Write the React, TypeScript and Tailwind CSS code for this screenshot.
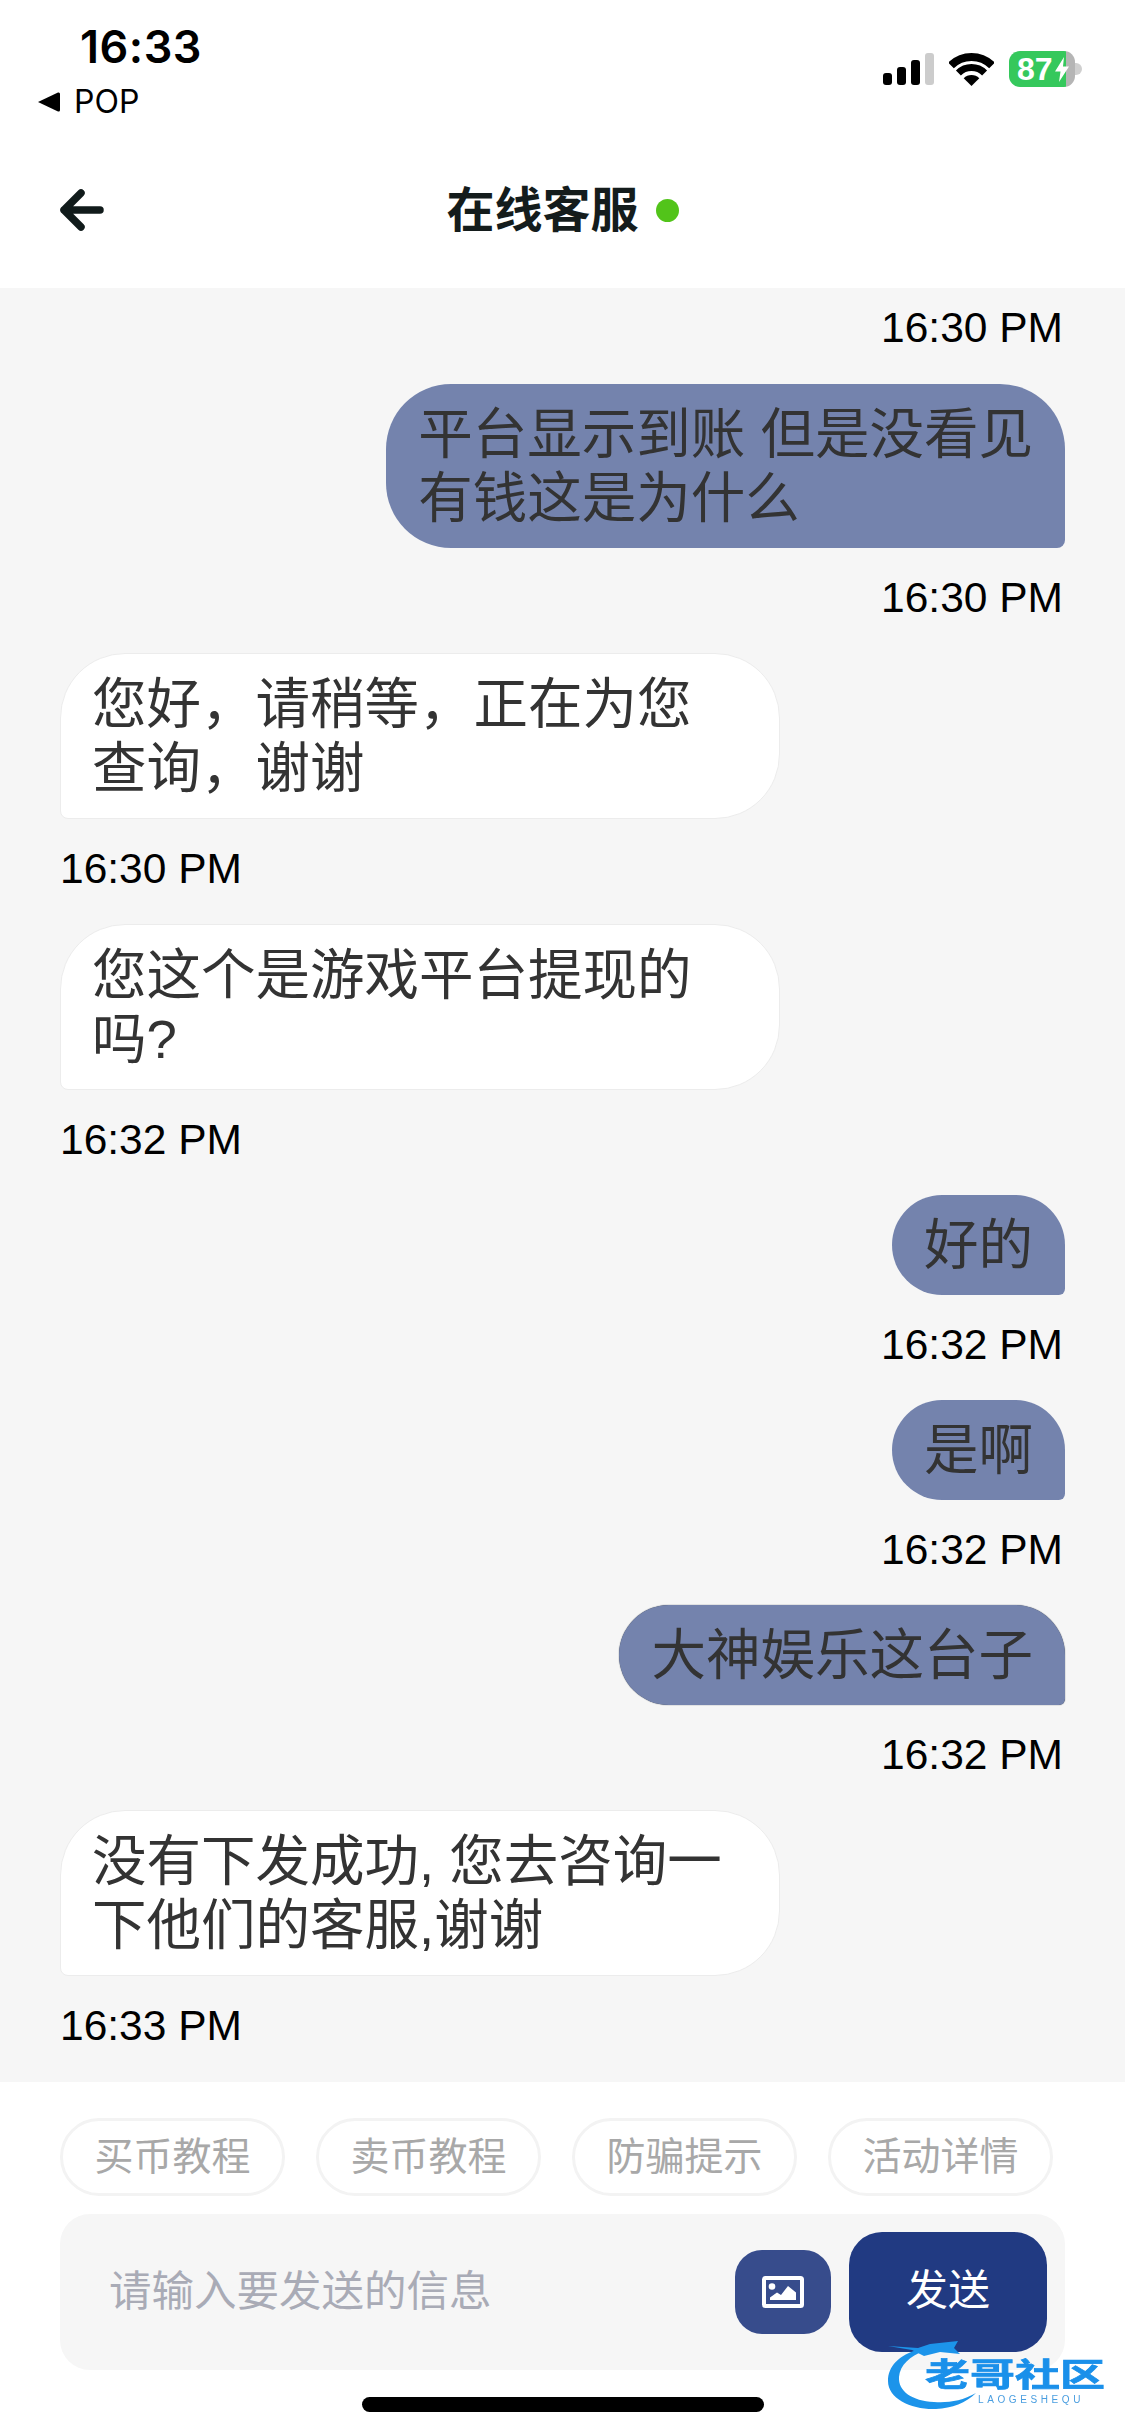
const messages = [
  { time: "16:30 PM", me: true, lines: ["平台显示到账 但是没看见", "有钱这是为什么"] },
  { time: "16:30 PM", me: false, lines: ["您好，请稍等，正在为您", "查询，谢谢"] },
  { time: "16:32 PM", me: false, lines: ["您这个是游戏平台提现的", "吗?"] },
  { time: "16:32 PM", me: true, lines: ["好的"] },
  { time: "16:32 PM", me: true, lines: ["是啊"] },
  { time: "16:32 PM", me: true, edge: true, lines: ["大神娱乐这台子"] },
  { time: "16:33 PM", me: false, lines: ["没有下发成功, 您去咨询一", "下他们的客服,谢谢"] },
];

const chips = ["买币教程", "卖币教程", "防骗提示", "活动详情"];

function StatusIcons() {
  return (
    <div className="flex items-center gap-[15px] mt-[51px] h-[36px] pr-[43px]">
      <div className="flex items-end gap-[5px] h-[32px]">
        <div className="w-[9px] h-[12px] rounded-[3px] bg-black" />
        <div className="w-[9px] h-[18px] rounded-[3px] bg-black" />
        <div className="w-[9px] h-[25px] rounded-[3px] bg-black" />
        <div className="w-[9px] h-[32px] rounded-[3px] bg-[#cccccc]" />
      </div>
      <svg width="45" height="33" viewBox="0 0 45 33" fill="none">
        <path d="M2 12.5A29 29 0 0 1 43 12.5" stroke="#000" strokeWidth="8" />
        <path d="M9.42 19.92A18.5 18.5 0 0 1 35.58 19.92" stroke="#000" strokeWidth="7" />
        <path d="M22.5 33L14.7 25.2A11 11 0 0 1 30.3 25.2Z" fill="#000" />
      </svg>
      <div className="flex items-center">
        <div className="relative flex w-[66px] h-[36px] rounded-[11px] overflow-hidden">
          <div className="w-[57px] bg-[#35c85c] pl-[8px] text-[32px] leading-[36px] font-bold text-white font-['Liberation_Sans',sans-serif]">
            87
          </div>
          <div className="w-[9px] bg-[#b5b5b5]" />
          <svg className="absolute left-[46px] top-[6px]" width="14" height="25" viewBox="0 0 14 25">
            <path d="M9 0L0 14.5H5.5L4 25L14 9.5H8Z" fill="#fff" />
          </svg>
        </div>
        <div className="w-[7px] h-[12px] rounded-r-full bg-[#cfcfcf]" />
      </div>
    </div>
  );
}

function Header() {
  return (
    <header className="h-[288px] shrink-0 flex flex-col bg-white">
      <div className="h-[130px] flex justify-between">
        <div className="flex flex-col pl-[38px] pt-[22px]">
          <span className="pl-[42px] text-[45px] leading-[50px] tracking-[0.5px] font-semibold text-black font-['Inter',sans-serif]">
            16:33
          </span>
          <div className="mt-[11px] flex items-center gap-[14px]">
            <svg width="22" height="20" viewBox="0 0 22 20">
              <path d="M0 10L20 0.5Q22 0 22 2V18Q22 20 20 19.5Z" fill="#000" />
            </svg>
            <span className="text-[32px] leading-[38px] text-black font-['Inter',sans-serif]">POP</span>
          </div>
        </div>
        <StatusIcons />
      </div>
      <div className="flex-1 grid grid-cols-[1fr_auto_1fr] items-center pt-[2px]">
        <div className="pl-[57px]">
          <svg width="50" height="48" viewBox="0 0 50 48" fill="none">
            <path
              d="M24 7L7 24L24 41M7 24H43"
              stroke="#111b1b"
              strokeWidth="7.5"
              strokeLinecap="round"
              strokeLinejoin="round"
            />
          </svg>
        </div>
        <div className="flex items-center gap-[17px]">
          <h1 className="pt-[2px] text-[48px] leading-[56px] font-bold text-[#141c1c]">在线客服</h1>
          <div className="w-[23px] h-[23px] rounded-full bg-[#52c41a]" />
        </div>
        <div />
      </div>
    </header>
  );
}

function Message({ time, me, edge, lines }: { time: string; me: boolean; edge?: boolean; lines: string[] }) {
  return (
    <div className={`flex flex-col ${me ? "items-end" : "items-start"}`}>
      <div
        className={
          me
            ? `bg-[#7483ad] rounded-[65px] rounded-br-[8px] px-[32px] pt-[19px] pb-[17px] text-[54.5px] leading-[64px] text-[#333333] whitespace-nowrap ${edge ? "shadow-[0_0_1px_#1f2937]" : ""}`
            : "w-[720px] bg-white border border-[#ececec] rounded-[65px] rounded-bl-[8px] px-[31px] pt-[19px] pb-[17px] text-[54.5px] leading-[64px] text-[#333333] whitespace-nowrap"
        }
      >
        {lines.map((line) => (
          <div key={line}>{line}</div>
        ))}
      </div>
      <div className={`mt-[26px] mb-[31px] text-[42.5px] leading-[48px] text-black ${me ? "pr-[2px]" : ""}`}>{time}</div>
    </div>
  );
}

function Watermark() {
  return (
    <div className="absolute left-[888px] top-[253px] w-[222px] h-[76px] blur-[0.6px]">
      <svg className="absolute left-0 top-0" width="96" height="76" viewBox="0 0 96 76">
        <path d="M32 14C10 20 0 32 0 46C0 64 24 75 48 74C64 73 78 68 88 58C74 66 60 68 46 67C24 66 10 56 11 42C12 30 22 21 36 16Z" fill="#1c94ea" />
        <path d="M0 11L30 13L42 9L70 6L66 13L72 19L52 17L36 21L24 15Z" fill="#1c94ea" />
      </svg>
      <div className="absolute left-[37px] top-[24px] origin-top scale-y-[0.72] text-[45px] leading-[46px] font-bold text-[#1a90ea] whitespace-nowrap [-webkit-text-stroke:1px_#1a90ea]">
        老哥社区
      </div>
      <div className="absolute left-[90px] top-[60px] text-[10px] leading-[10px] tracking-[3.6px] text-[#4a9ee0] whitespace-nowrap">
        LAOGESHEQU
      </div>
    </div>
  );
}

function Composer() {
  return (
    <footer className="relative flex-1 bg-white px-[60px] pt-[36px]">
      <div className="flex justify-between pr-[12px]">
        {chips.map((chip) => (
          <div
            key={chip}
            className="w-[225px] h-[78px] rounded-full border-[3px] border-[#f3f3f3] flex items-center justify-center text-[39px] text-[#a8a8a8]"
          >
            {chip}
          </div>
        ))}
      </div>
      <div className="mt-[18px] h-[156px] rounded-[30px] bg-[#f6f6f6] flex items-center pl-[49px] pr-[18px]">
        <span className="flex-1 text-[42.5px] text-[#a9abb6]">请输入要发送的信息</span>
        <button className="w-[96px] h-[84px] rounded-[27px] bg-[#374c8c] flex items-center justify-center">
          <svg width="42" height="32" viewBox="0 0 42 32" fill="none">
            <rect x="2" y="2" width="38" height="28" rx="1.5" stroke="#fff" strokeWidth="4" />
            <circle cx="10" cy="10.5" r="3.3" fill="#fff" />
            <path d="M8 24V21.5L15 16.5L19 19L26 10L34 16.5V24Z" fill="#fff" />
          </svg>
        </button>
        <button className="ml-[18px] pb-[3px] w-[198px] h-[120px] rounded-[33px] bg-[#213a82] text-[42px] text-white">
          发送
        </button>
      </div>
      <div className="mt-[27px] mx-auto w-[402px] h-[15px] rounded-full bg-black" />
      <Watermark />
    </footer>
  );
}

export default function App() {
  return (
    <div className="w-[1125px] h-[2436px] flex flex-col overflow-hidden bg-white font-['Liberation_Sans','Noto_Sans_CJK_SC',sans-serif]">
      <Header />
      <div className="h-[1794px] shrink-0 bg-[#f6f6f6] px-[60px] pt-[16px] overflow-hidden">
        <div className="flex justify-end pr-[2px] mb-[32px] text-[42.5px] leading-[48px] text-black">16:30 PM</div>
        {messages.map((m, i) => (
          <Message key={i} time={m.time} me={m.me} edge={m.edge} lines={m.lines} />
        ))}
      </div>
      <Composer />
    </div>
  );
}
